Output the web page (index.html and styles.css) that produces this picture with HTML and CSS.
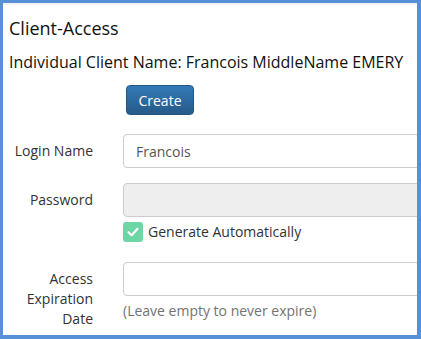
FILE: index.html
```html
<!DOCTYPE html>
<html lang="en">
<head>
    <meta charset="UTF-8">
    <meta name="viewport" content="width=device-width, initial-scale=1.0">
    <title>Client-Access</title>
    <link rel="stylesheet" href="styles.css">
</head>
<body>
    <div class="frame">
        <div class="top-strip"></div>
        <h1 class="page-title">Client-Access</h1>
        <h2 class="client-name">Individual Client Name: Francois MiddleName EMERY</h2>

        <div class="actions">
            <button class="btn-create">Create</button>
        </div>

        <div class="form-row">
            <label class="row-label">Login Name</label>
            <div class="row-field">
                <input class="text-input" value="Francois">
            </div>
        </div>

        <div class="form-row">
            <label class="row-label">Password</label>
            <div class="row-field">
                <input class="text-input" disabled>
                <div class="check-line">
                    <span class="check-box">
                        <svg width="14" height="14" viewBox="0 0 14 14">
                            <path d="M2.5 7.2 L5.6 10.2 L11.5 3.8" fill="none" stroke="#fff" stroke-width="2.2" stroke-linecap="round" stroke-linejoin="round"/>
                        </svg>
                    </span>
                    <span class="check-text">Generate Automatically</span>
                </div>
            </div>
        </div>

        <div class="form-row">
            <label class="row-label">Access Expiration Date</label>
            <div class="row-field">
                <input class="text-input">
                <div class="help-text">(Leave empty to never expire)</div>
            </div>
        </div>
    </div>
</body>
</html>
```

FILE: styles.css
```css
* {
    box-sizing: border-box;
}

body {
    margin: 0;
    font-family: 'Open Sans', 'Noto Sans', sans-serif;
    font-size: 14px;
    line-height: 20px;
    color: #333;
    background: #fff;
}

.frame {
    width: 421px;
    height: 339px;
    border-style: solid;
    border-color: #5890d8;
    border-width: 3px 4px 4px 3px;
    overflow: hidden;
    background: #fff;
}

.top-strip {
    height: 2px;
    background: #f2f2f2;
}

.page-title {
    margin: 11px 0 0 6px;
    font-size: 18px;
    font-weight: normal;
    line-height: 24px;
    color: #111;
}

.client-name {
    margin: 12px 0 0 6px;
    font-size: 16px;
    font-weight: normal;
    line-height: 20px;
    color: #111;
    white-space: nowrap;
}

.actions {
    padding-left: 123px;
    margin-top: 13px;
}

.btn-create {
    width: 68px;
    height: 30px;
    padding: 0;
    font-family: inherit;
    font-size: 14px;
    color: #fff;
    background: linear-gradient(to bottom, #337ab7 0, #265a88 100%);
    border: 1px solid #245580;
    border-radius: 4px;
    cursor: pointer;
}

.form-row {
    display: flex;
    gap: 30px;
    margin-bottom: 15px;
}

.actions + .form-row {
    margin-top: 19px;
}

.row-label {
    flex: 0 0 90px;
    padding-top: 7px;
    text-align: right;
}

.row-field {
    flex: 0 0 auto;
}

.text-input {
    display: block;
    width: 340px;
    height: 34px;
    padding: 6px 12px;
    font-family: inherit;
    font-size: 14px;
    color: #555;
    background: #fff;
    border: 1px solid #ccc;
    border-radius: 4px;
}

.text-input:disabled {
    background: #eee;
}

.check-line {
    display: flex;
    align-items: center;
    gap: 5px;
    margin: 5px 0;
    height: 20px;
}

.check-box {
    display: flex;
    align-items: center;
    justify-content: center;
    width: 20px;
    height: 20px;
    background: #6dd6a5;
    border-radius: 3px;
}

.help-text {
    margin-top: 5px;
    color: #737373;
}
```
